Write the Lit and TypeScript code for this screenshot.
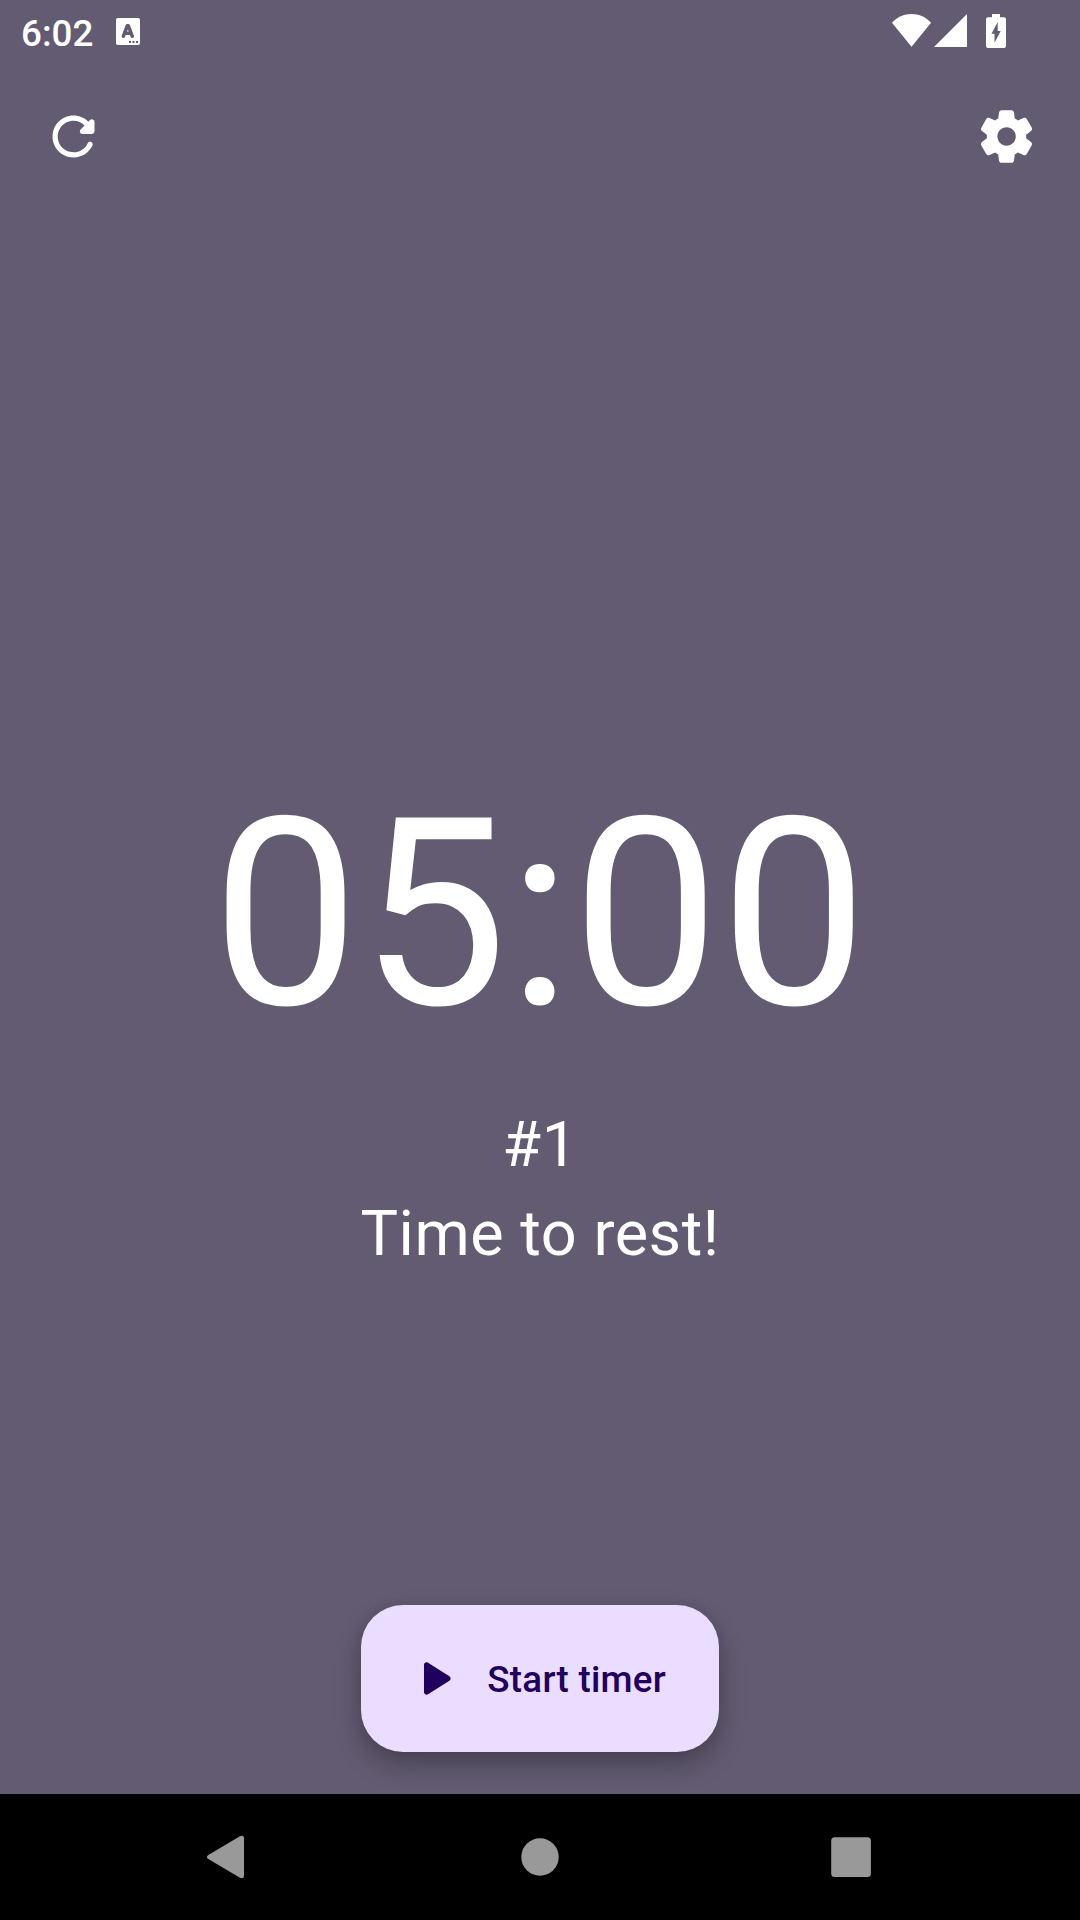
import { LitElement, html, css } from "lit";
import { customElement, state } from "lit/decorators.js";

@customElement("status-bar")
class StatusBar extends LitElement {
  static styles = css`
    :host {
      display: flex;
      align-items: flex-start;
      height: 63px;
      padding: 0 74px 0 21px;
      box-sizing: border-box;
      color: #fff;
    }
    .clock {
      font-size: 36.75px;
      font-weight: 500;
      line-height: 43px;
      padding-top: 12px;
    }
    svg {
      display: block;
      fill: currentColor;
    }
    .keyboard {
      margin: 18px 0 0 23px;
    }
    .system {
      display: flex;
      margin: 14px 0 0 auto;
    }
    .signal {
      margin-left: 3px;
    }
    .battery {
      margin-left: 19px;
    }
    .cut {
      fill: #625b71;
    }
    .letter {
      fill: none;
      stroke: #625b71;
      stroke-width: 3.4;
      stroke-linecap: round;
      stroke-linejoin: round;
    }
  `;

  render() {
    return html`
      <span class="clock">6:02</span>
      <svg class="keyboard" width="24" height="27" viewBox="0 0 24 27">
        <rect width="24" height="27" rx="2" />
        <path class="letter" d="M7.3 18.3 11.2 7.800h1.200l3.900 10.500M9 15.300h5.600" />
        <path class="cut" d="M13 23h2v2h-2zM16.500 23h2v2h-2zM20 23h2v2h-2z" />
      </svg>
      <div class="system">
        <svg width="39" height="33" viewBox="0 0 39 33">
          <path d="M19.5 32.7 0 8.8C5 3.3 12 0 19.5 0S34 3.3 39 8.8z" />
        </svg>
        <svg class="signal" width="33" height="33" viewBox="0 0 33 33">
          <path d="M33 0v33H0z" />
        </svg>
        <svg class="battery" width="20" height="34" viewBox="0 0 20 34">
          <path d="M6 0h8v3.3h4a2 2 0 0 1 2 2V32a2 2 0 0 1-2 2H2a2 2 0 0 1-2-2V5.3a2 2 0 0 1 2-2h4z" />
          <path class="cut" d="M11.7 8v9h3L8.5 28.8V19.700h-3z" />
        </svg>
      </div>
    `;
  }
}

@customElement("navigation-bar")
class NavigationBar extends LitElement {
  static styles = css`
    :host {
      display: flex;
      justify-content: space-between;
      align-items: center;
      height: 126px;
      padding: 0 198px;
      box-sizing: border-box;
      background: #000;
    }
    svg {
      display: block;
      fill: #999;
    }
  `;

  render() {
    return html`
      <svg width="62" height="62" viewBox="0 0 62 62">
        <path d="M10.3 28.9 41.5 10.4Q46 8.5 46 12.5V49.5Q46 53.5 41.5 51.6L10.3 33.1Q7.5 31 10.3 28.9z" />
      </svg>
      <svg width="62" height="62" viewBox="0 0 62 62">
        <circle cx="31" cy="31" r="18.7" />
      </svg>
      <svg width="62" height="62" viewBox="0 0 62 62">
        <rect x="11.2" y="11.2" width="39.7" height="39.7" rx="3.5" />
      </svg>
    `;
  }
}

@customElement("app-root")
class AppRoot extends LitElement {
  static styles = css`
    :host {
      display: flex;
      flex-direction: column;
      height: 1920px;
      background: #625b71;
      color: #fff;
      font-family: Roboto, "Liberation Sans", sans-serif;
    }
    button {
      border: 0;
      margin: 0;
      padding: 0;
      background: none;
      color: inherit;
      font: inherit;
    }
    .icon {
      display: block;
      width: 63px;
      height: 63px;
      fill: currentColor;
    }
    .toolbar {
      display: flex;
      justify-content: space-between;
      padding: 42px 42px 0;
    }
    .content {
      flex: 1;
      display: flex;
      flex-direction: column;
      align-items: center;
      padding-top: 596px;
    }
    .time {
      font-size: 262.5px;
      line-height: 300px;
      letter-spacing: 0.525px;
    }
    .caption {
      margin-top: 36px;
      font-size: 63px;
      line-height: 89px;
      letter-spacing: 0.525px;
      text-align: center;
    }
    .actions {
      display: flex;
      justify-content: center;
      padding-bottom: 42px;
    }
    .start {
      display: flex;
      align-items: center;
      gap: 21px;
      box-sizing: border-box;
      width: 357.4px;
      height: 147px;
      padding-left: 42px;
      border-radius: 42px;
      background: #eaddff;
      color: #21005d;
      font-size: 36.75px;
      font-weight: 500;
      letter-spacing: 0.26px;
      white-space: nowrap;
      box-shadow: 0 12px 26px rgba(0, 0, 0, 0.26), 0 3px 14px rgba(0, 0, 0, 0.08);
    }
    .label {
      padding-top: 2px;
    }
  `;

  @state() private time = "05:00";
  @state() private round = 1;

  render() {
    return html`
      <status-bar></status-bar>
      <div class="toolbar">
        <button aria-label="Reset">
          <svg class="icon" viewBox="0 0 24 24">
            <path
              d="M17.65 6.35c-1.63-1.63-3.94-2.57-6.48-2.31-3.67.37-6.69 3.35-7.1 7.02C3.52 15.91 7.27 20 12 20c3.19 0 5.93-1.87 7.21-4.56.32-.67-.16-1.44-.9-1.44-.37 0-.72.2-.88.53-1.13 2.43-3.84 3.97-6.8 3.31-2.22-.49-4.01-2.3-4.48-4.52C5.31 9.44 8.26 6 12 6c1.66 0 3.14.69 4.22 1.78l-1.51 1.51c-.63.63-.19 1.71.7 1.71H19c.55 0 1-.45 1-1V6.41c0-.89-1.08-1.34-1.71-.71l-.64.65z"
            />
          </svg>
        </button>
        <button aria-label="Settings">
          <svg class="icon" viewBox="0 0 24 24">
            <path
              d="M19.5 12c0-.23-.01-.45-.03-.68l1.86-1.41c.4-.3.51-.86.26-1.3l-1.87-3.23c-.25-.44-.79-.62-1.25-.42l-2.15.91c-.37-.26-.76-.49-1.17-.68l-.29-2.31C14.8 2.38 14.37 2 13.87 2h-3.73c-.51 0-.94.38-1 .88l-.29 2.31c-.41.19-.8.42-1.17.68l-2.15-.91c-.46-.2-1-.02-1.25.42L2.41 8.62c-.25.44-.14.99.26 1.3l1.86 1.41C4.51 11.55 4.5 11.77 4.5 12s.01.45.03.68l-1.86 1.41c-.4.3-.51.86-.26 1.3l1.87 3.23c.25.44.79.62 1.25.42l2.15-.91c.37.26.76.49 1.17.68l.29 2.31c.06.5.49.88.99.88h3.73c.5 0 .93-.38.99-.88l.29-2.31c.41-.19.8-.42 1.17-.68l2.15.91c.46.2 1 .02 1.25-.42l1.87-3.23c.25-.44.14-.99-.26-1.3l-1.86-1.41C19.49 12.45 19.5 12.23 19.5 12zM12.04 15.5c-1.93 0-3.5-1.57-3.5-3.5s1.57-3.5 3.5-3.5 3.5 1.57 3.5 3.5S13.97 15.5 12.04 15.5z"
            />
          </svg>
        </button>
      </div>
      <main class="content">
        <div class="time">${this.time}</div>
        <div class="caption">
          <div>#${this.round}</div>
          <div>Time to rest!</div>
        </div>
      </main>
      <div class="actions">
        <button class="start">
          <svg class="icon" viewBox="0 0 24 24">
            <path
              d="M8 6.82v10.36c0 .79.87 1.27 1.54.84l8.14-5.18c.62-.39.62-1.29 0-1.69L9.54 5.98C8.87 5.55 8 6.03 8 6.82z"
            />
          </svg>
          <span class="label">Start timer</span>
        </button>
      </div>
      <navigation-bar></navigation-bar>
    `;
  }
}
